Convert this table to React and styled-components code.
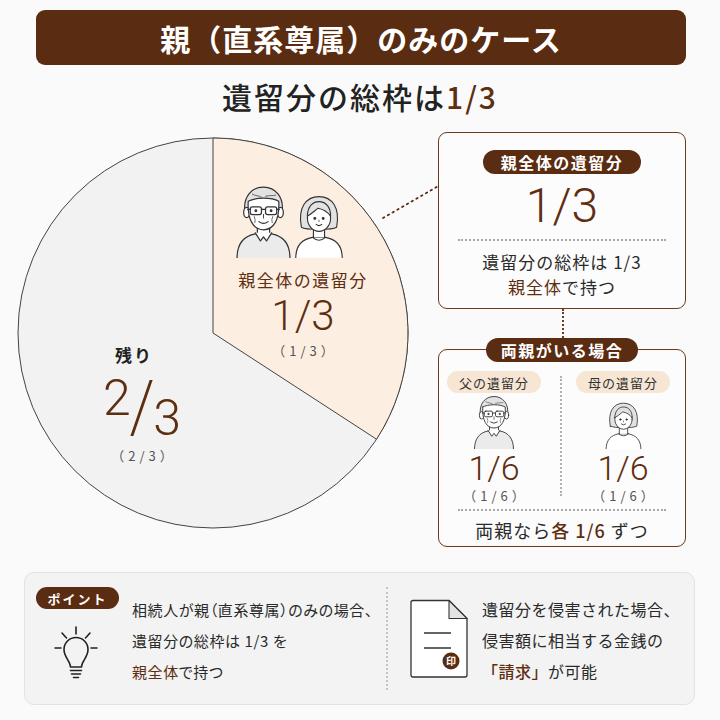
import React from "react";
import styled, { createGlobalStyle } from "styled-components";

const BROWN = "#5a2c11";
const ACCENT = "#5e2e10";
const TEXT = "#2a2a2a";
const FONT = `"Noto Sans CJK JP", "Noto Sans", sans-serif`;
const NUM = `"Roboto", "Noto Sans CJK JP", sans-serif`;

const Global = createGlobalStyle`
  html, body { margin: 0; padding: 0; background: #fafafa; }
  body { font-family: ${FONT}; color: ${TEXT}; }
  * { box-sizing: border-box; }
`;

const Page = styled.div`
  width: 720px;
  height: 720px;
  overflow: hidden;
  display: flex;
  flex-direction: column;
  background: #fafafa;
`;

const Header = styled.div`
  margin: 10px 34px 0 36px;
  height: 55px;
  background: ${BROWN};
  border-radius: 9px;
  display: flex;
  align-items: center;
  justify-content: center;
  color: #fff;
  font-size: 30px;
  font-weight: 700;
  letter-spacing: 1px;
`;

const Subtitle = styled.div`
  height: 62px;
  display: flex;
  align-items: center;
  justify-content: center;
  font-size: 30px;
  font-weight: 500;
  color: #222;
  letter-spacing: 2px;
`;

const Accent = styled.span`
  color: ${ACCENT};
  font-weight: ${(p) => p.$w || "inherit"};
`;

const Main = styled.div`
  position: relative;
  display: flex;
  height: 445px;
`;

const PieArea = styled.div`
  position: relative;
  width: 400px;
  height: 410px;
  margin-left: 16px;
`;

const Connector = styled.svg`
  position: absolute;
  left: 380px;
  top: 56px;
  overflow: visible;
`;

const SliceLabel = styled.div`
  position: absolute;
  left: 207px;
  top: 58px;
  width: 160px;
  display: flex;
  flex-direction: column;
  align-items: center;
`;

const People = styled.div`
  display: flex;
  align-items: flex-end;
  margin-right: 26px;
  gap: 1px;
`;

const SliceTitle = styled.div`
  margin-top: 10px;
  font-size: 17px;
  line-height: 24px;
  color: ${ACCENT};
  letter-spacing: 1.5px;
`;

const Num = styled.div`
  font-family: ${NUM};
  font-weight: 300;
  color: ${ACCENT};
  font-size: ${(p) => p.$size}px;
  line-height: ${(p) => p.$lh || p.$size}px;
  margin-top: ${(p) => p.$mt || 0}px;
`;

const Paren = styled.div`
  font-family: ${FONT};
  font-size: 13px;
  color: #555;
  letter-spacing: 4px;
  line-height: 15px;
  margin-top: ${(p) => p.$mt || 0}px;
  padding-left: 4px;
`;

const RestLabel = styled.div`
  position: absolute;
  left: 66px;
  top: 216px;
  width: 120px;
  display: flex;
  flex-direction: column;
  align-items: center;
`;

const RestTitle = styled.div`
  font-size: 17px;
  line-height: 24px;
  font-weight: 700;
  color: #222;
  letter-spacing: 2px;
  margin-right: 16px;
`;

const Frac = styled.div`
  display: flex;
  height: 56px;
  margin-top: 13px;
  font-family: ${NUM};
  font-weight: 300;
  color: ${ACCENT};
`;

const FracPart = styled.span`
  font-size: 50px;
  line-height: 36px;
  height: 36px;
  align-self: ${(p) => (p.$up ? "flex-start" : "flex-end")};
`;

const FracSlash = styled.span`
  display: block;
  width: 2.5px;
  height: 56px;
  background: ${ACCENT};
  transform: skewX(-19deg);
  margin: 0 11px 0 9px;
`;

const RightCol = styled.div`
  margin-left: 22px;
  width: 248px;
  padding-top: 5px;
  display: flex;
  flex-direction: column;
`;

const Box = styled.div`
  border: 1.3px solid #6b3b1c;
  border-radius: 9px;
  height: ${(p) => p.$h}px;
  display: flex;
  flex-direction: column;
  align-items: center;
  background: #fcfcfc;
  padding-top: ${(p) => p.$pt || 0}px;
`;

const Pill = styled.div`
  background: ${BROWN};
  color: #fff;
  height: 24px;
  border-radius: 12px;
  padding: 0 ${(p) => p.$px || 18}px;
  display: flex;
  align-items: center;
  font-size: 16px;
  font-weight: 700;
  letter-spacing: 1.5px;
  margin-top: ${(p) => p.$mt || 0}px;
`;

const DotLine = styled.div`
  width: 208px;
  border-top: 2px dotted #a8a8a8;
  margin-top: ${(p) => p.$mt || 0}px;
`;

const BoxText = styled.div`
  font-size: 17px;
  line-height: 25px;
  letter-spacing: 1px;
  text-align: center;
  color: #2a2a2a;
  margin-top: ${(p) => p.$mt || 0}px;
`;

const VLink = styled.div`
  height: 40px;
  width: 0;
  border-left: 2px dotted #6b3b1c;
  align-self: center;
  margin-left: 2px;
`;

const Columns = styled.div`
  display: grid;
  grid-template-columns: 110px 24px 1fr;
  width: 100%;
  margin-top: 9px;
  height: 125px;
`;

const Col = styled.div`
  display: flex;
  flex-direction: column;
  align-items: center;
  padding-right: ${(p) => p.$pr || 0}px;
`;

const Divider = styled.div`
  justify-self: center;
  width: 0;
  border-left: 2px dotted #b0b0b0;
  margin-top: 5px;
  height: 120px;
`;

const SmallPill = styled.div`
  background: #f7e6d3;
  height: 22px;
  border-radius: 11px;
  padding: 0 12px;
  display: flex;
  align-items: center;
  font-size: 13px;
  letter-spacing: 1px;
  color: #333;
`;

const IconWrap = styled.div`
  margin-top: 2px;
  height: 54px;
  display: flex;
  align-items: flex-end;
`;

const BoxFooter = styled.div`
  font-size: 18px;
  line-height: 26px;
  letter-spacing: 1px;
  margin-top: 6px;
  color: #2a2a2a;
`;

const Panel = styled.div`
  margin: 0 25px 0 24px;
  height: 133px;
  background: #f3f3f3;
  border: 1px solid #e2e2e2;
  border-radius: 10px;
  display: grid;
  grid-template-columns: 96px 265px 2px 21px 60px 1fr;
`;

const PointCol = styled.div`
  display: flex;
  flex-direction: column;
  padding: 14px 0 0 11px;
`;

const PointPill = styled.div`
  width: 83px;
  height: 22px;
  border-radius: 11px;
  background: ${BROWN};
  color: #fff;
  font-size: 13px;
  font-weight: 700;
  letter-spacing: 2px;
  display: flex;
  align-items: center;
  justify-content: center;
`;

const BulbWrap = styled.div`
  margin: 17px 0 0 16px;
`;

const PanelText = styled.div`
  padding: 21px 0 0 ${(p) => p.$pl || 0}px;
  font-size: ${(p) => p.$fs || 16}px;
  line-height: 31px;
  letter-spacing: ${(p) => p.$ls || 0.5}px;
  color: #2a2a2a;
  white-space: nowrap;
  font-feature-settings: ${(p) => (p.$palt ? '"palt"' : "normal")};
`;

const PanelDivider = styled.div`
  border-left: 2px dotted #c4c4c4;
  margin: 14px 0;
`;

const DocWrap = styled.div`
  grid-column: 5;
  padding-top: 26px;
`;

function Father({ w = 56 }) {
  const h = (w * 72) / 56;
  return (
    <svg width={w} height={h} viewBox="0 0 56 72" fill="none" stroke="#333" strokeWidth="1.2" strokeLinejoin="round" strokeLinecap="round">
      <path d="M2 72 C2 58 9 50 20 48 L36 48 C47 50 54 58 54 72" fill="#ebebeb" />
      <path d="M22 40 V49 H34 V40" fill="#fff" />
      <path d="M20 47 L25 55 L28 51 L31 55 L36 47" fill="#fff" />
      <path d="M10 28 C7 11 17 2 28 2 C39 2 49 11 46 28 Z" fill="#e2e2e2" />
      <ellipse cx="11.5" cy="27" rx="3" ry="5" fill="#fff" />
      <ellipse cx="44.5" cy="27" rx="3" ry="5" fill="#fff" />
      <path d="M13 16 C12 34 18 44 28 44 C38 44 44 34 43 16 C36 12 20 12 13 16 Z" fill="#fff" />
      <path d="M17 9 C20 11 23 10 26 12 M30 11 C34 10 37 11 40 10" strokeWidth="0.7" />
      <rect x="15" y="21.5" width="11" height="7.5" rx="2" />
      <rect x="30" y="21.5" width="11" height="7.5" rx="2" />
      <path d="M26 24 H30 M12.5 24 H15 M41 24 H43.5" />
      <circle cx="20.5" cy="25.3" r="0.8" fill="#333" />
      <circle cx="35.5" cy="25.3" r="0.8" fill="#333" />
      <path d="M28 29 V32.5" strokeWidth="0.9" />
      <path d="M23.5 36 Q28 39.5 32.5 36" />
      <path d="M19 31 Q20.5 34 19.5 37 M37 31 Q35.5 34 36.5 37" strokeWidth="0.7" />
    </svg>
  );
}

function Mother({ w = 52 }) {
  const h = (w * 72) / 56;
  return (
    <svg width={w} height={h} viewBox="0 0 56 72" fill="none" stroke="#333" strokeWidth="1.2" strokeLinejoin="round" strokeLinecap="round">
      <path d="M9 39 C5 18 14 6 28 6 C42 6 51 18 47 39 C42 42 14 42 9 39 Z" fill="#e2e2e2" />
      <path d="M3 72 C3 59 10 52 21 50 L35 50 C46 52 53 59 53 72" fill="#fff" />
      <path d="M22 41 V50 H34 V41" fill="#fff" stroke="none" />
      <path d="M22 42 V50 M34 42 V50" />
      <path d="M21 50 Q28 56 35 50" />
      <ellipse cx="28" cy="29" rx="12.5" ry="14.5" fill="#fff" />
      <path d="M15.5 27 C15.5 16 22 11 29 11.5 C36 12 40.5 18 40.5 27 C37 22 32 19.5 27 18.5 C23 21.5 19.5 25 15.5 27 Z" fill="#e2e2e2" />
      <circle cx="23.5" cy="29.5" r="1" fill="#333" />
      <circle cx="32.5" cy="29.5" r="1" fill="#333" />
      <path d="M28 31.5 V33" strokeWidth="0.8" />
      <path d="M25 36 Q28 38.5 31 36" />
    </svg>
  );
}

function Bulb() {
  return (
    <svg width="48" height="56" viewBox="0 0 48 56" fill="none" stroke="#222" strokeWidth="1.6" strokeLinecap="round" strokeLinejoin="round">
      <path d="M24 1 V8 M10 7 L14.5 12 M38 7 L33.5 12 M3 22 H9 M39 22 H45" />
      <path d="M18.5 41 C18.5 35 12 31.5 12 23.5 A12 12 0 0 1 36 23.5 C36 31.5 29.5 35 29.5 41 Z" />
      <path d="M18.5 44.5 H29.5 M19.5 48 H28.5 M21.5 51.5 H26.5" />
    </svg>
  );
}

function Doc() {
  return (
    <svg width="60" height="80" viewBox="0 0 60 80">
      <path d="M4 1.5 H40 L58 19.5 V76 Q58 78 56 78 H4 Q2 78 2 76 V3.5 Q2 1.5 4 1.5 Z" fill="#fff" stroke="#333" strokeWidth="1.3" />
      <path d="M40 1.5 V19.5 H58 Z" fill="#e4e4e4" stroke="#333" strokeWidth="1.1" strokeLinejoin="round" />
      <path d="M15 34 H42 M15 49 H42" stroke="#333" strokeWidth="1.6" />
      <circle cx="42" cy="62" r="8.5" fill="#5a2c11" />
      <text x="42" y="65.5" textAnchor="middle" fontSize="10" fontWeight="700" fill="#fff" fontFamily='"Noto Sans CJK JP", sans-serif'>印</text>
    </svg>
  );
}

function PieChart() {
  const cx = 197;
  const cy = 206;
  const r = 195;
  const a = (123 * Math.PI) / 180;
  const ex = cx + r * Math.sin(a);
  const ey = cy - r * Math.cos(a);
  return (
    <svg width="400" height="410" viewBox="0 0 400 410">
      <circle cx={cx} cy={cy} r={r} fill="#f2f2f2" stroke="#444" strokeWidth="1" />
      <path d={`M${cx} ${cy} L${cx} ${cy - r} A${r} ${r} 0 0 1 ${ex} ${ey} Z`} fill="#fcefe1" stroke="#444" strokeWidth="1" />
    </svg>
  );
}

export default function App() {
  return (
    <Page>
      <Global />
      <Header>親（直系尊属）のみのケース</Header>
      <Subtitle>
        遺留分の総枠は<Accent>1/3</Accent>
      </Subtitle>
      <Main>
        <PieArea>
          <PieChart />
          <SliceLabel>
            <People>
              <Father w={57} />
              <Mother w={52} />
            </People>
            <SliceTitle>親全体の遺留分</SliceTitle>
            <Num $size={42} $lh={46} $mt={1}>1/3</Num>
            <Paren $mt={4}>（1/3）</Paren>
          </SliceLabel>
          <RestLabel>
            <RestTitle>残り</RestTitle>
            <Frac>
              <FracPart $up>2</FracPart>
              <FracSlash />
              <FracPart>3</FracPart>
            </Frac>
            <Paren $mt={12}>（2/3）</Paren>
          </RestLabel>
        </PieArea>
        <Connector width="62" height="36" viewBox="0 0 62 36">
          <path d="M3 35 L60 2" stroke="#5a2c11" strokeWidth="1.8" strokeDasharray="1.5 4" strokeLinecap="round" />
        </Connector>
        <RightCol>
          <Box $h={177} $pt={17}>
            <Pill $px={18}>親全体の遺留分</Pill>
            <Num $size={48} $lh={52} $mt={6}>1/3</Num>
            <DotLine $mt={7} />
            <BoxText $mt={8}>遺留分の総枠は 1/3</BoxText>
            <BoxText>
              <Accent>親全体</Accent>で持つ
            </BoxText>
          </Box>
          <VLink />
          <Box $h={198}>
            <Pill $mt={-12} $px={15}>両親がいる場合</Pill>
            <Columns>
              <Col>
                <SmallPill>父の遺留分</SmallPill>
                <IconWrap>
                  <Father w={42} />
                </IconWrap>
                <Num $size={34} $lh={38}>1/6</Num>
                <Paren $mt={1}>（1/6）</Paren>
              </Col>
              <Divider />
              <Col $pr={12}>
                <SmallPill>母の遺留分</SmallPill>
                <IconWrap>
                  <Mother w={39} />
                </IconWrap>
                <Num $size={34} $lh={38}>1/6</Num>
                <Paren $mt={1}>（1/6）</Paren>
              </Col>
            </Columns>
            <DotLine $mt={13} />
            <BoxFooter>
              両親なら<Accent $w={500}>各 1/6</Accent> ずつ
            </BoxFooter>
          </Box>
        </RightCol>
      </Main>
      <Panel>
        <PointCol>
          <PointPill>ポイント</PointPill>
          <BulbWrap>
            <Bulb />
          </BulbWrap>
        </PointCol>
        <PanelText $pl={11} $fs={15} $ls={0.6} $palt>
          相続人が親（直系尊属）のみの場合、
          <br />
          遺留分の総枠は 1/3 を
          <br />
          <Accent>親全体</Accent>で持つ
        </PanelText>
        <PanelDivider />
        <DocWrap>
          <Doc />
        </DocWrap>
        <PanelText $pl={13} $fs={16}>
          遺留分を侵害された場合、
          <br />
          侵害額に相当する金銭の
          <br />
          <Accent $w={500}>「請求」</Accent>が可能
        </PanelText>
      </Panel>
    </Page>
  );
}
